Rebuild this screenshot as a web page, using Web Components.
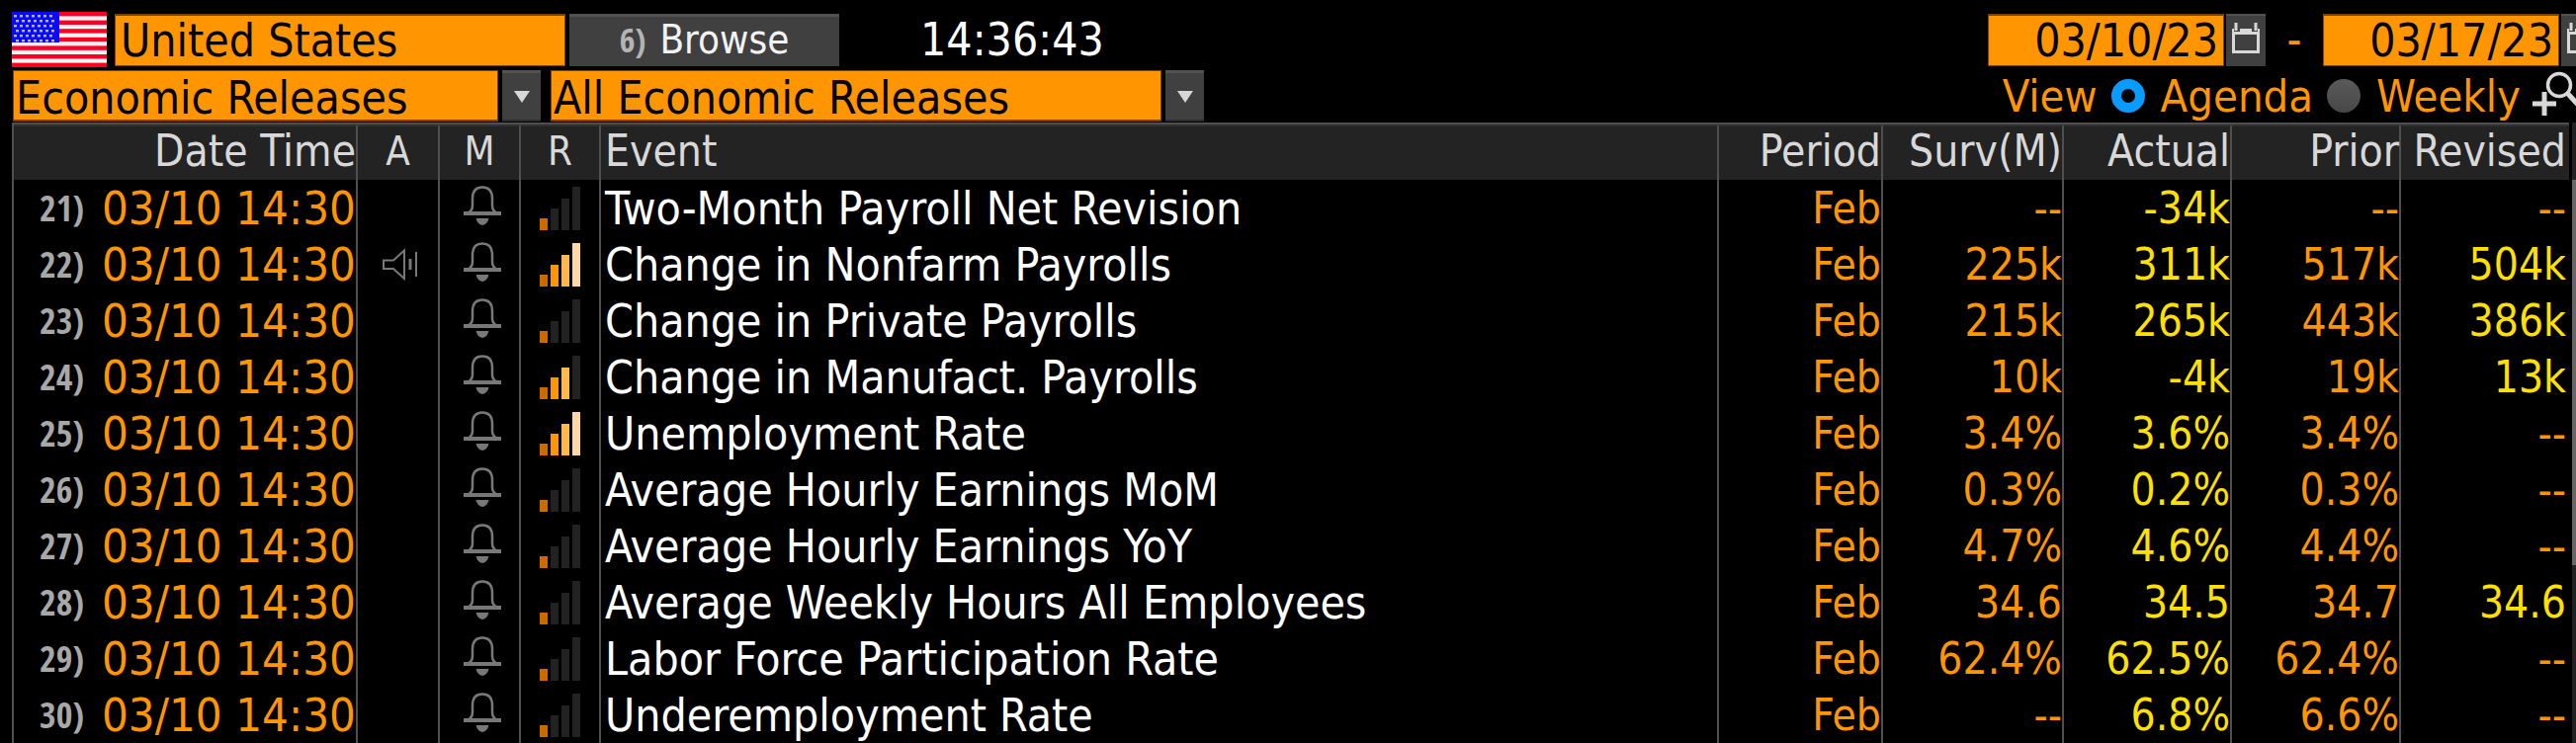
<!DOCTYPE html>
<html lang="en">
<head>
<meta charset="utf-8">
<title>Economic Releases</title>
<style>
    html, body {
        margin: 0;
        height: 100%;
        background: #000;
        overflow: hidden;
    }
    body {
        font-family: "DejaVu Sans Condensed", "DejaVu Sans", sans-serif;
        --amber: #ff9500;
        --yellow: #ffe000;
        --line: #4f4f4f;
        --key: #404040;
        --narrow: "Open Sans Condensed", "Roboto Condensed", "DejaVu Sans Condensed", sans-serif;
    }
</style>
</head>
<body>
<calendar-screen></calendar-screen>

<script>
function define(name, html, setup) {
    const template = document.createElement("template");
    template.innerHTML = html;
    customElements.define(name, class extends HTMLElement {
        constructor() {
            super();
            this.attachShadow({mode: "open"});
        }
        connectedCallback() {
            if (this.shadowRoot.firstChild) return;
            this.shadowRoot.appendChild(template.content.cloneNode(true));
            if (setup) setup(this, this.shadowRoot);
        }
    });
}

// ---- icons ----

define("us-flag", `
    <style>
        :host { display: block; width: 96px; height: 56px; }
        svg { display: block; }
    </style>
    <svg width="96" height="56" viewBox="0 0 96 56" role="img" aria-label="US flag"></svg>
`, (el, root) => {
    let shapes = '<rect width="96" height="56" fill="#fff4f4"/>';
    for (let i = 0; i < 7; i++) {
        shapes += `<rect y="${i * 8.6}" width="96" height="4.4" fill="#ff0024"/>`;
    }
    shapes += '<rect width="48" height="31" fill="#0a0aff"/>';
    for (let r = 0; r < 6; r++) {
        for (let c = 0; c < 7; c++) {
            shapes += `<rect x="${2 + c * 6 + (r % 2) * 2}" y="${3 + r * 5}" width="3" height="2.4" fill="#b4b4ff"/>`;
        }
    }
    root.querySelector("svg").innerHTML = shapes;
});

define("bell-icon", `
    <style>
        :host { display: block; padding: 0 0 5px 5px; }
        svg { display: block; margin: 0 auto; }
    </style>
    <svg width="38" height="40" viewBox="0 0 38 40">
        <path d="M5 27Q9 25 9 20V13Q9 1.500 19 1.500T29 13V20Q29 25 33 27" fill="none" stroke="#787878" stroke-width="2.500"/>
        <rect y="26" width="38" height="4" fill="#787878"/>
        <path d="M12.500 33H25.500Q24 39 19 40Q14 39 12.500 33Z" fill="#787878"/>
    </svg>
`);

define("speaker-icon", `
    <style>
        :host { display: block; padding-left: 5px; }
        svg { display: block; margin: 0 auto; }
    </style>
    <svg width="36" height="34" viewBox="0 0 36 34" fill="none" stroke="#787878" stroke-width="2">
        <path d="M1 12.500H11L22 2.500V31L11 21H1Z"/>
        <path d="M28 11V22" stroke-width="3"/>
        <path d="M34 4V29"/>
    </svg>
`);

// relevance bars, level 1 to 4
define("signal-bars", `
    <style>
        :host { display: flex; justify-content: center; align-items: flex-end; gap: 3px; height: 44px; }
        i { width: 8px; background: #222; }
        i:nth-of-type(1) { height: 12px; }
        i:nth-of-type(2) { height: 22px; }
        i:nth-of-type(3) { height: 32px; }
        i:nth-of-type(4) { height: 44px; }
    </style>
    <i></i><i></i><i></i><i></i>
`, (el, root) => {
    const colors = ["#cc6a00", "#ff9500", "#ffb84a", "#ffd8a4"];
    root.querySelectorAll("i").forEach((bar, i) => {
        if (i < Number(el.getAttribute("level"))) bar.style.background = colors[i];
    });
});

// ---- form controls ----

define("amber-input", `
    <style>
        :host { display: flex; }
        input {
            box-sizing: border-box;
            width: 100%;
            min-width: 0;
            height: 53px;
            padding: 0 5px;
            border: 1px solid #7a4400;
            border-top-width: 2px;
            border-radius: 0;
            background: var(--amber);
            color: #000;
            font: 46px "DejaVu Sans Condensed", "DejaVu Sans", sans-serif;
        }
        :host([right]) input { text-align: right; }
    </style>
    <input type="text">
`, (el, root) => {
    const input = root.querySelector("input");
    input.value = el.getAttribute("value");
    input.setAttribute("aria-label", el.getAttribute("label"));
});

define("amber-select", `
    <style>
        :host { display: flex; gap: 4px; }
        select {
            flex: 1;
            min-width: 0;
            height: 52px;
            padding: 0 2px;
            border: 1px solid #7a4400;
            border-bottom-width: 2px;
            border-radius: 0;
            appearance: none;
            background: var(--amber);
            color: #000;
            font: 46px "DejaVu Sans Condensed", "DejaVu Sans", sans-serif;
        }
        .arrow {
            box-sizing: border-box;
            display: flex;
            align-items: center;
            justify-content: center;
            width: 39px;
            background: var(--key);
            border-top: 3px solid #525252;
            border-bottom: 2px solid #2c2c2c;
        }
    </style>
    <select><option></option></select>
    <span class="arrow">
        <svg width="16" height="12" viewBox="0 0 16 12"><path d="M0 0H16L8 12Z" fill="#d8d8d8"/></svg>
    </span>
`, (el, root) => {
    root.querySelector("option").textContent = el.getAttribute("value");
    root.querySelector("select").setAttribute("aria-label", el.getAttribute("label"));
});

define("calendar-key", `
    <style>
        :host { display: block; }
        button {
            display: flex;
            justify-content: center;
            box-sizing: border-box;
            width: 40px;
            height: 53px;
            padding: 7px 0 0;
            border: 0;
            border-top: 2px solid #525252;
            background: var(--key);
        }
    </style>
    <button aria-label="Pick date">
        <svg width="28" height="31" viewBox="0 0 28 31">
            <path d="M1.500 7V29.500H26.500V7" fill="none" stroke="#d8d8d8" stroke-width="3"/>
            <rect y="6" width="28" height="6" fill="#d8d8d8"/>
            <path d="M5 1V9M23 1V9" stroke="#404040" stroke-width="6"/>
            <path d="M4 0V8M24 0V8" stroke="#d8d8d8" stroke-width="3"/>
        </svg>
    </button>
`);

define("view-radio", `
    <style>
        :host { display: block; }
        label { display: flex; align-items: center; gap: 16px; }
        input {
            appearance: none;
            box-sizing: border-box;
            width: 34px;
            height: 34px;
            margin: 0;
            border-radius: 50%;
            background: linear-gradient(#5a5a5a, #474747);
        }
        input:checked { background: #000; border: 10px solid #0a9bff; }
    </style>
    <label><input type="radio"><span><slot></slot></span></label>
`, (el, root) => {
    root.querySelector("input").checked = el.hasAttribute("checked");
});

// ---- page parts ----

define("top-bar", `
    <style>
        :host { display: flex; align-items: center; height: 56px; padding: 12px 0 2px 12px; font-size: 46px; white-space: nowrap; }
        .country { width: 456px; margin-left: 8px; }
        .browse {
            display: flex;
            align-items: center;
            justify-content: center;
            gap: 14px;
            width: 273px;
            height: 53px;
            margin-left: 4px;
            padding: 0 0 4px;
            border: 0;
            border-top: 3px solid #525252;
            background: var(--key);
            color: #f2f2f2;
            font: 40px "DejaVu Sans Condensed", "DejaVu Sans", sans-serif;
        }
        .num { color: #b4b4b4; font: 34px var(--narrow); }
        time { margin-left: 82px; color: #fff; }
        /* the last calendar key runs off the right side */
        .range { display: flex; align-items: center; gap: 2px; margin-left: auto; margin-right: -25px; color: var(--amber); }
        .date { width: 239px; }
        .dash { width: 54px; text-align: center; }
    </style>
    <us-flag></us-flag>
    <amber-input class="country" label="Country" value="United States"></amber-input>
    <button class="browse"><span class="num">6)</span><span>Browse</span></button>
    <time>14:36:43</time>
    <div class="range">
        <amber-input class="date" right label="From" value="03/10/23"></amber-input>
        <calendar-key></calendar-key>
        <span class="dash">-</span>
        <amber-input class="date" right label="To" value="03/17/23"></amber-input>
        <calendar-key></calendar-key>
    </div>
`);

define("filter-bar", `
    <style>
        :host { display: flex; align-items: center; height: 56px; padding-left: 13px; font-size: 45px; white-space: nowrap; }
        .kind { width: 534px; }
        .release { width: 661px; margin-left: 10px; }
        .view { display: flex; align-items: center; margin-left: auto; color: var(--amber); }
        view-radio { margin-left: 14px; }
        .zoom { display: block; margin-left: 12px; padding: 0; border: 0; background: none; }
        svg { display: block; }
    </style>
    <amber-select class="kind" label="Calendar" value="Economic Releases"></amber-select>
    <amber-select class="release" label="Release type" value="All Economic Releases"></amber-select>
    <div class="view">
        <span>View</span>
        <view-radio checked>Agenda</view-radio>
        <view-radio>Weekly</view-radio>
        <button class="zoom" aria-label="Zoom in">
            <svg width="44" height="50" viewBox="0 0 44 50" fill="none" stroke="#d8d8d8">
                <path d="M0 33H24M12 21V45" stroke-width="5"/>
                <circle cx="27" cy="14" r="11.500" stroke-width="3.500"/>
                <path d="M35 22L46 34" stroke-width="5"/>
            </svg>
        </button>
    </div>
`);

const releases = [
    ["21", 1, "Two-Month Payroll Net Revision", "--", "-34k", "--", "--"],
    ["22", 4, "Change in Nonfarm Payrolls", "225k", "311k", "517k", "504k"],
    ["23", 1, "Change in Private Payrolls", "215k", "265k", "443k", "386k"],
    ["24", 3, "Change in Manufact. Payrolls", "10k", "-4k", "19k", "13k"],
    ["25", 4, "Unemployment Rate", "3.4%", "3.6%", "3.4%", "--"],
    ["26", 1, "Average Hourly Earnings MoM", "0.3%", "0.2%", "0.3%", "--"],
    ["27", 1, "Average Hourly Earnings YoY", "4.7%", "4.6%", "4.4%", "--"],
    ["28", 1, "Average Weekly Hours All Employees", "34.6", "34.5", "34.7", "34.6"],
    ["29", 1, "Labor Force Participation Rate", "62.4%", "62.5%", "62.4%", "--"],
    ["30", 1, "Underemployment Rate", "--", "6.8%", "6.6%", "--"]
];

define("release-table", `
    <style>
        :host { display: block; border-left: 2px solid var(--line); border-top: 2px solid var(--line); }
        table { width: 100%; table-layout: fixed; border-collapse: separate; border-spacing: 0; white-space: nowrap; }
        th, td { box-sizing: border-box; height: 57px; padding: 0; border-right: 2px solid var(--line); line-height: 50px; font-weight: normal; }
        th:last-child, td:last-child { border-right: 0; padding-right: 3px; }
        th { height: 56px; padding-bottom: 4px; background: #232323; color: #d8d8d8; font-size: 44px; line-height: 48px; text-align: right; border-top: 2px solid #303030; }
        th.mid { font-size: 40px; text-align: center; }
        td { color: var(--amber); font-size: 44px; text-align: right; }
        .event { padding-left: 4px; text-align: left; }
        td.event { color: #fff; font-size: 46px; }
        .when { display: flex; align-items: center; justify-content: space-between; padding: 0 0 0 26px; font-size: 47px; }
        .num { color: #a8a8a8; font: 36px var(--narrow); }
        .actual { color: var(--yellow); }
    </style>
    <table>
        <colgroup>
            <col style="width: 348px"><col style="width: 83px"><col style="width: 82px"><col style="width: 81px">
            <col>
            <col style="width: 166px"><col style="width: 183px"><col style="width: 170px"><col style="width: 171px"><col style="width: 170px">
        </colgroup>
        <thead>
            <tr>
                <th>Date Time</th><th class="mid">A</th><th class="mid">M</th><th class="mid">R</th>
                <th class="event">Event</th>
                <th>Period</th><th>Surv(M)</th><th>Actual</th><th>Prior</th><th>Revised</th>
            </tr>
        </thead>
        <tbody></tbody>
    </table>
`, (el, root) => {
    root.querySelector("tbody").innerHTML = releases.map(([num, level, event, survey, actual, prior, revised]) => `
        <tr>
            <td><div class="when"><span class="num">${num})</span><span>03/10 14:30</span></div></td>
            <td>${num === "22" ? "<speaker-icon></speaker-icon>" : ""}</td>
            <td><bell-icon></bell-icon></td>
            <td><signal-bars level="${level}"></signal-bars></td>
            <td class="event">${event}</td>
            <td>Feb</td>
            <td>${survey}</td>
            <td class="actual">${actual}</td>
            <td>${prior}</td>
            <td class="${revised === "--" ? "" : "actual"}">${revised}</td>
        </tr>`).join("");
});

define("scroll-track", `
    <style>
        :host { display: flex; flex-direction: column; width: 4px; background: #222; }
        .cap { height: 58px; background: #232323; }
        .thumb { height: 390px; background: #666; }
    </style>
    <div class="cap"></div>
    <div class="thumb"></div>
`);

define("calendar-screen", `
    <style>
        :host { display: flex; flex-direction: column; height: 100%; overflow: hidden; }
        .grid { display: flex; gap: 3px; padding-left: 12px; }
        release-table { flex: 1; min-width: 0; }
    </style>
    <top-bar></top-bar>
    <filter-bar></filter-bar>
    <div class="grid">
        <release-table></release-table>
        <scroll-track></scroll-track>
    </div>
`);
</script>
</body>
</html>
